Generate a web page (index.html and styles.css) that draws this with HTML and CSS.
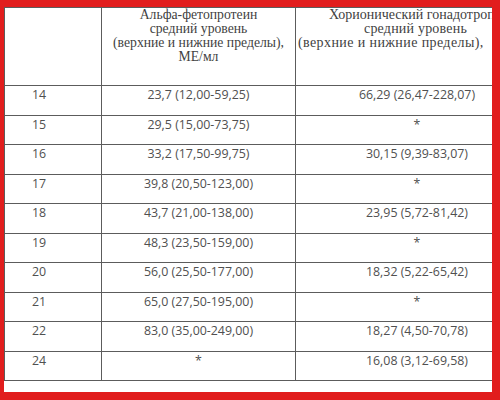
FILE: index.html
```html
<!DOCTYPE html>
<html lang="ru">
<head>
<meta charset="utf-8">
<link rel="stylesheet" href="styles.css">
</head>
<body>
<div class="frame">
  <div class="clip">
    <table class="grid">
      <colgroup>
        <col class="c1"><col class="c2"><col class="c3">
      </colgroup>
      <thead>
        <tr>
          <th class="h1"></th>
          <th class="h2">Альфа-фетопротеин<br>средний уровень<br>(верхние и нижние пределы),<br>МЕ/мл</th>
          <th class="h3">
            <span class="l l1">Хорионический гонадотропин,</span>
            <span class="l l2">средний уровень</span>
            <span class="l l3">(верхние и нижние пределы),</span>
          </th>
        </tr>
      </thead>
      <tbody>
        <tr><td>14</td><td>23,7 (12,00-59,25)</td><td>66,29 (26,47-228,07)</td></tr>
        <tr><td>15</td><td>29,5 (15,00-73,75)</td><td>*</td></tr>
        <tr><td>16</td><td>33,2 (17,50-99,75)</td><td>30,15 (9,39-83,07)</td></tr>
        <tr><td>17</td><td>39,8 (20,50-123,00)</td><td>*</td></tr>
        <tr><td>18</td><td>43,7 (21,00-138,00)</td><td>23,95 (5,72-81,42)</td></tr>
        <tr><td>19</td><td>48,3 (23,50-159,00)</td><td>*</td></tr>
        <tr><td>20</td><td>56,0 (25,50-177,00)</td><td>18,32 (5,22-65,42)</td></tr>
        <tr><td>21</td><td>65,0 (27,50-195,00)</td><td>*</td></tr>
        <tr><td>22</td><td>83,0 (35,00-249,00)</td><td>18,27 (4,50-70,78)</td></tr>
        <tr><td>24</td><td>*</td><td>16,08 (3,12-69,58)</td></tr>
      </tbody>
    </table>
  </div>
</div>
</body>
</html>
```
FILE: styles.css
```css
html, body {
  margin: 0;
  padding: 0;
  background: #e11d1d;
}
.frame {
  width: 500px;
  height: 400px;
  box-sizing: border-box;
  padding: 7px 8px 8px 4px;
  background: #e11d1d;
  overflow: hidden;
}
.clip {
  width: 488px;
  height: 385px;
  overflow: hidden;
  background: #fff;
}
.grid {
  border-collapse: collapse;
  table-layout: fixed;
  width: 534px;
}
.c1 { width: 97px; }
.c2 { width: 194px; }
.c3 { width: 243px; }
.grid th, .grid td {
  border: 1px solid #5c5c5c;
  padding: 0;
  vertical-align: top;
}
.grid th {
  height: 78px;
  box-sizing: border-box;
  font-family: "Liberation Serif", "Times New Roman", serif;
  font-weight: normal;
  color: #3f3f3f;
}
.h2 {
  text-align: center;
  font-size: 13.7px;
  line-height: 14px;
  padding-top: 2px;
}
.h3 {
  text-align: left;
  font-size: 14px;
  line-height: 14px;
  padding-top: 6px;
}
.l {
  display: block;
  white-space: nowrap;
}
.l1 { padding-left: 33px; }
.l2 { padding-left: 68px; letter-spacing: 0.2px; }
.l3 { padding-left: 2px; letter-spacing: 0.4px; }
.grid td {
  height: 29.5px;
  box-sizing: border-box;
  font-family: "Open Sans", "DejaVu Sans", sans-serif;
  font-size: 12.4px;
  line-height: 15px;
  color: #505050;
  text-align: center;
  padding-top: 1px;
  white-space: nowrap;
}
.grid td:first-child {
  text-align: left;
  padding-left: 27px;
}
```
